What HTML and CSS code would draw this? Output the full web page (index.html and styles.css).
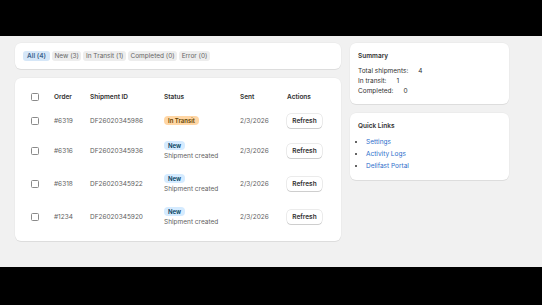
FILE: index.html
```html
<!DOCTYPE html>
<html lang="en">
<head>
<meta charset="utf-8">
<title>Shipments</title>
<link rel="stylesheet" href="styles.css">
</head>
<body>
<main class="frame">
  <div class="layout">
    <section class="main-col">
      <div class="card filters">
        <span class="pill active">All (4)</span>
        <span class="pill">New (3)</span>
        <span class="pill">In Transit (1)</span>
        <span class="pill">Completed (0)</span>
        <span class="pill">Error (0)</span>
      </div>
      <div class="card table-card">
        <table class="table">
          <colgroup>
            <col class="c-check"><col class="c-order"><col class="c-id"><col class="c-status"><col class="c-sent"><col class="c-actions">
          </colgroup>
          <thead>
            <tr>
              <th><span class="checkbox"></span></th>
              <th>Order</th>
              <th>Shipment ID</th>
              <th>Status</th>
              <th>Sent</th>
              <th>Actions</th>
            </tr>
          </thead>
          <tbody>
            <tr class="short">
              <td><span class="checkbox"></span></td>
              <td>#6319</td>
              <td>DF26020345986</td>
              <td><span class="badge transit">In Transit</span></td>
              <td>2/3/2026</td>
              <td><button class="btn">Refresh</button></td>
            </tr>
            <tr>
              <td><span class="checkbox"></span></td>
              <td>#6316</td>
              <td>DF26020345936</td>
              <td><span class="badge new">New</span><div class="sub">Shipment created</div></td>
              <td>2/3/2026</td>
              <td><button class="btn">Refresh</button></td>
            </tr>
            <tr>
              <td><span class="checkbox"></span></td>
              <td>#6318</td>
              <td>DF26020345922</td>
              <td><span class="badge new">New</span><div class="sub">Shipment created</div></td>
              <td>2/3/2026</td>
              <td><button class="btn">Refresh</button></td>
            </tr>
            <tr>
              <td><span class="checkbox"></span></td>
              <td>#1234</td>
              <td>DF26020345920</td>
              <td><span class="badge new">New</span><div class="sub">Shipment created</div></td>
              <td>2/3/2026</td>
              <td><button class="btn">Refresh</button></td>
            </tr>
          </tbody>
        </table>
      </div>
    </section>
    <aside class="side-col">
      <div class="card side-card">
        <h2 class="card-title">Summary</h2>
        <div class="stat">Total shipments:<span class="val">4</span></div>
        <div class="stat">In transit:<span class="val">1</span></div>
        <div class="stat">Completed:<span class="val">0</span></div>
      </div>
      <div class="card side-card">
        <h2 class="card-title">Quick Links</h2>
        <ul class="links">
          <li><a href="#">Settings</a></li>
          <li><a href="#">Activity Logs</a></li>
          <li><a href="#">Delifast Portal</a></li>
        </ul>
      </div>
    </aside>
  </div>
</main>
</body>
</html>
```

FILE: styles.css
```css
html, body {
  margin: 0;
  padding: 0;
  background: #000;
  height: 100%;
}
body {
  font-family: Inter, "Noto Sans", sans-serif;
  font-size: 6.5px;
  line-height: 10px;
  color: #303030;
}
.frame {
  margin-top: 36px;
  height: 231px;
  background: #f1f1f1;
  box-sizing: border-box;
  padding: 7px 15px;
}
.layout {
  display: flex;
  gap: 9px;
  align-items: flex-start;
}
.main-col {
  width: 326px;
  display: flex;
  flex-direction: column;
  gap: 9px;
}
.side-col {
  width: 159px;
  display: flex;
  flex-direction: column;
  gap: 9px;
}
.card {
  background: #fff;
  border-radius: 6px;
  box-shadow: 0 1px 0 rgba(26, 26, 26, 0.07), 0 0 0 0.5px rgba(0, 0, 0, 0.04);
  box-sizing: border-box;
}
.filters {
  height: 26px;
  padding: 8px;
  display: flex;
  gap: 2px;
  align-items: center;
}
.pill {
  height: 10px;
  line-height: 10px;
  padding: 0 2.5px;
  border-radius: 3px;
  background: #ededed;
  color: #666;
  font-weight: 400;
  white-space: nowrap;
}
.pill.active {
  padding: 0 4px;
  background: #d6e7f8;
  color: #3c638c;
  font-weight: 600;
}
.table-card {
  padding: 8px;
}
.table {
  width: 310px;
  border-collapse: collapse;
  table-layout: fixed;
}
.c-check { width: 23px; }
.c-order { width: 36px; }
.c-id { width: 74px; }
.c-status { width: 76px; }
.c-sent { width: 47px; }
.c-actions { width: 54px; }
.table th {
  text-align: left;
  font-weight: 600;
  color: #303030;
  height: 21px;
  padding: 0 0 0 8px;
  box-sizing: border-box;
  vertical-align: middle;
}
.table td {
  padding: 6.5px 0 6.5px 8px;
  color: #616161;
  vertical-align: middle;
  white-space: nowrap;
}
.checkbox {
  display: block;
  width: 6px;
  height: 6px;
  border: 0.75px solid #8a8a8a;
  border-radius: 1.5px;
  background: #fff;
}
.badge {
  display: inline-block;
  height: 9px;
  line-height: 9px;
  margin: 0.5px 0;
  padding: 0 4px;
  border-radius: 4px;
  font-size: 6px;
  font-weight: 600;
  vertical-align: top;
}
.badge.transit {
  background: #ffd6a4;
  color: #5e4200;
}
.badge.new {
  background: #d5ebff;
  color: #003a5a;
}
.sub {
  color: #616161;
  line-height: 10px;
}
.btn {
  display: block;
  height: 14px;
  width: 35px;
  padding: 0;
  border: none;
  border-radius: 4px;
  background: #fff;
  box-shadow: 0 0 0 0.5px rgba(0, 0, 0, 0.16), 0 1px 0 rgba(0, 0, 0, 0.12);
  font-family: inherit;
  font-size: 6.5px;
  font-weight: 600;
  color: #303030;
  line-height: 14px;
}
.side-card {
  padding: 8px;
}
.card-title {
  margin: 0 0 5px 0;
  font-size: 6.5px;
  line-height: 10px;
  font-weight: 600;
  color: #303030;
}
.stat {
  line-height: 10px;
  color: #303030;
}
.val {
  margin-left: 10px;
}
.links {
  margin: 4px 0 0 0;
  padding-left: 8px;
}
.links li {
  line-height: 12px;
}
.links a {
  color: #2c6ecb;
  text-decoration: none;
}
```
